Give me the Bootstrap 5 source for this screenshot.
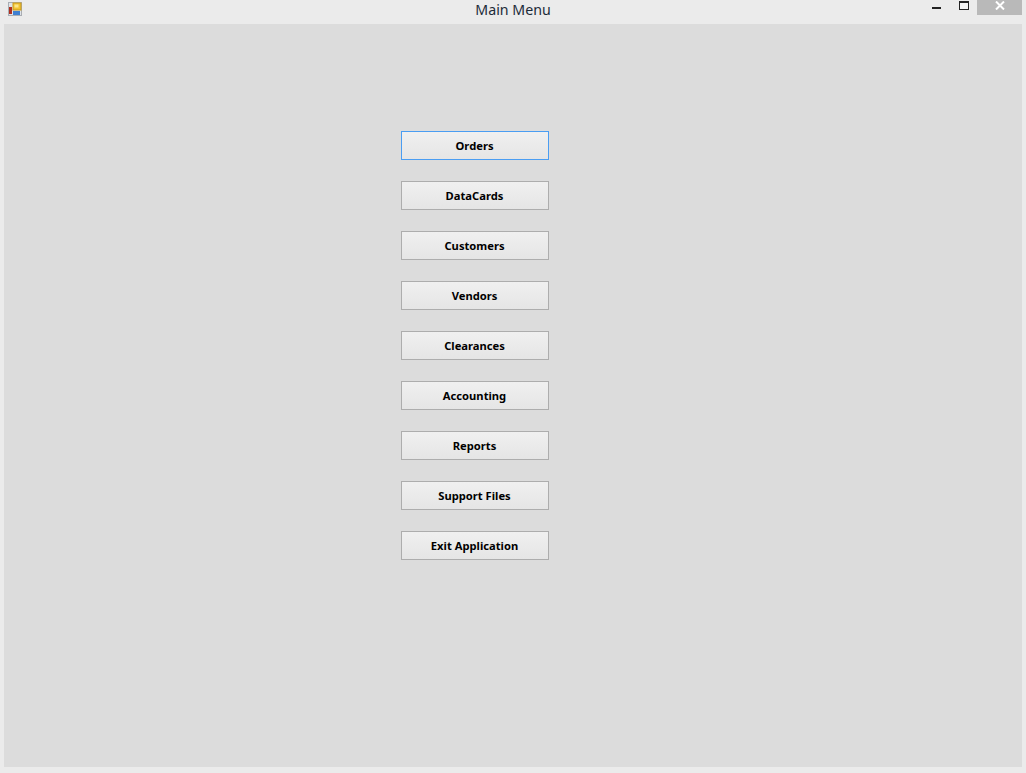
<!doctype html>
<html lang="en">
<head>
<meta charset="utf-8">
<title>Main Menu</title>
<link href="https://cdn.jsdelivr.net/npm/bootstrap@5.3.0/dist/css/bootstrap.min.css" rel="stylesheet">
<style>
html, body { height: 100%; margin: 0; }
body { background: #ebebeb; overflow: hidden; }
.win-frame { height: 773px; padding: 0 4px 6px; }
.title-bar { height: 24px; margin: 0 -4px; display: grid; grid-template-columns: 1fr auto 1fr; }
.title-text { font: 14.2px/19px "Noto Sans", sans-serif; color: #1c2a38; }
.app-ico { display: block; margin: 2px 0 0 8px; }
.win-ctrls { justify-content: flex-end; align-items: flex-start; padding-right: 4px; }
.ctl-min { width: 44px; height: 15px; padding: 7px 0 0 17px; }
.ctl-min i { display: block; width: 9px; height: 2px; background: #222; }
.ctl-max { width: 18px; height: 10px; padding-top: 1px; }
.ctl-max i { display: block; width: 10px; height: 9px; border: 1px solid #222; border-top-width: 2px; background: #f2f2f2; }
.ctl-close { width: 45px; height: 15px; background: #b9b9b9; padding: 1px 0 0 1px; }
.client { height: 743px; background: #dcdcdc; padding: 107px 0 0 397px; }
.menu-btn { width: 148px; height: 29px; border: 1px solid #adadad; border-radius: 0; padding: 0 1px 0 0;
  background: linear-gradient(#f0f0f0, #e5e5e5); color: #000; transition: none;
  font: 700 11.2px/28px "Noto Sans", sans-serif; text-align: center; }
.menu-btn.is-default { border-color: #4a9df2; }
.menu-btn:hover, .menu-btn:focus, .menu-btn:active { background: linear-gradient(#f0f0f0, #e5e5e5) !important; color: #000 !important; }
.menu-stack { gap: 21px; width: 148px; }
</style>
</head>
<body>
<div class="win-frame">
  <div class="title-bar">
    <div>
      <svg class="app-ico" width="14" height="14" viewBox="0 0 14 14" aria-hidden="true">
        <rect x="0.5" y="0.5" width="13" height="13" fill="#dfe3e8" stroke="#a9adb3"/>
        <rect x="5" y="1" width="8" height="7" fill="#f2c230" stroke="#c99a1c"/>
        <rect x="6.5" y="2.5" width="4" height="3" fill="#fbe58a"/>
        <rect x="1" y="5" width="3" height="7" fill="#b03020"/>
        <rect x="5" y="9" width="7" height="4" fill="#3f7fd0"/>
      </svg>
    </div>
    <div class="title-text">Main Menu</div>
    <div class="d-flex win-ctrls">
      <div class="ctl-min"><i></i></div>
      <div class="ctl-max"><i></i></div>
      <div class="ctl-close d-flex align-items-start justify-content-center">
        <svg width="10" height="9" viewBox="0 0 10 9" aria-hidden="true"><path d="M1 .5 9 8.5M9 .5 1 8.5" stroke="#fff" stroke-width="2" fill="none"/></svg>
      </div>
    </div>
  </div>
  <div class="client">
    <div class="d-flex flex-column menu-stack">
      <button type="button" class="btn menu-btn is-default">Orders</button>
      <button type="button" class="btn menu-btn">DataCards</button>
      <button type="button" class="btn menu-btn">Customers</button>
      <button type="button" class="btn menu-btn">Vendors</button>
      <button type="button" class="btn menu-btn">Clearances</button>
      <button type="button" class="btn menu-btn">Accounting</button>
      <button type="button" class="btn menu-btn">Reports</button>
      <button type="button" class="btn menu-btn">Support Files</button>
      <button type="button" class="btn menu-btn">Exit Application</button>
    </div>
  </div>
</div>
<script src="https://cdn.jsdelivr.net/npm/bootstrap@5.3.0/dist/js/bootstrap.bundle.min.js"></script>
</body>
</html>
